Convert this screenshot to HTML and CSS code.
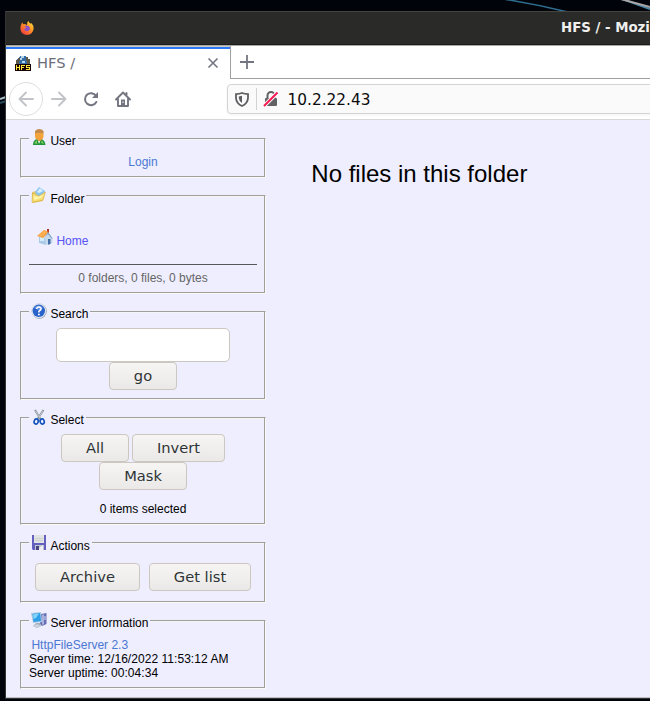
FILE: index.html
```html
<!DOCTYPE html>
<html lang="en">
<head>
<meta charset="utf-8">
<title>HFS /</title>
<link rel="stylesheet" href="styles.css">
</head>
<body>
<svg class="wallpaper" width="650" height="701" viewBox="0 0 650 701" aria-hidden="true">
  <path d="M503 -1Q535 4 568 12" stroke="#2f6d8f" stroke-width="1.5" fill="none"/>
  <path d="M622 -1L650 9" stroke="#4785a5" stroke-width="2"/>
  <path d="M617 -2L650 7" stroke="#aaa5a5" stroke-width="2"/>
  <path d="M0 99L6 97" stroke="#a9bdc8" stroke-width="2"/>
  <path d="M0 103L6 101" stroke="#28495c" stroke-width="2"/>
</svg>
<div class="window">
  <header class="titlebar">
    <svg class="firefox" width="14" height="14" viewBox="0 0 14 14">
      <defs><linearGradient id="fx" x1="1" y1="0" x2="0.2" y2="1"><stop offset="0" stop-color="#fff04a"/><stop offset=".45" stop-color="#ff9a24"/><stop offset="1" stop-color="#f0383f"/></linearGradient></defs>
      <path d="M2.2 1.3 3.2 3.3 5 3 6.3 4 7.2 3.2Q6.8 1 8.5 0 9 2 11 2.8L11.4 2Q14 4.700 13.600 8 12.700 13.600 7 13.900 1.500 13.600.4 8.500 0 5 2.200 1.300Z" fill="url(#fx)"/>
      <path d="M4.500 5 6.500 4.500 8.500 5Q10.500 6 9.800 8.500 8 11 5 9.500 3.400 8 4.800 7.400L6.500 7Z" fill="#8a50cf"/>
    </svg>
    <span class="window-title">HFS / - Mozilla Firefox</span>
  </header>
  <div class="tabs">
    <div class="tab">
      <svg class="favicon" width="16" height="16" viewBox="0 0 16 16" shape-rendering="crispEdges">
        <circle cx="8" cy="7" r="7" fill="#356ca5"/>
        <path d="M1 4h2V2h2v3H4v3H1zM11 1h2v2h2v5h-3V5h-1z" fill="#5d594b"/>
        <path d="M6 0h3v2H7v2H5V2h1zM7 5h3v2H7z" fill="#b4d4ec"/>
        <path d="M0 8h16v7H0z" fill="#180000"/>
        <path d="M1 9h1v2h2V9h1v5H4v-2H2v2H1zM6 9h4v1H7v1h2v1H7v2H6zM11 9h4v1h-3v1h3v3h-4v-1h3v-1h-3z" fill="#ffe83b"/>
      </svg>
      <span class="tab-title">HFS /</span>
      <svg class="close" width="12" height="12" viewBox="0 0 12 12"><path d="M1.500 1.500 10.500 10.500M10.500 1.500 1.500 10.500" stroke="#737580" stroke-width="1.600"/></svg>
    </div>
    <div class="tab-space">
      <svg width="14" height="14" viewBox="0 0 14 14"><path d="M7 0V14M0 7H14" stroke="#737580" stroke-width="1.800"/></svg>
    </div>
  </div>
  <nav class="toolbar">
    <span class="back"><svg width="16" height="16" viewBox="0 0 16 16"><path d="M15 8H1.500M8 1.500 1.500 8 8 14.500" fill="none" stroke="#c2c3c8" stroke-width="1.900" stroke-linecap="round" stroke-linejoin="round"/></svg></span>
    <svg class="forward" width="16" height="16" viewBox="0 0 16 16"><path d="M1 8H14.500M8 1.500 14.500 8 8 14.500" fill="none" stroke="#c2c3c8" stroke-width="1.900" stroke-linecap="round" stroke-linejoin="round"/></svg>
    <svg class="reload" width="16" height="16" viewBox="0 0 16 16"><path d="M13 4.800A6 6 0 1 0 13.300 11" fill="none" stroke="#737580" stroke-width="2" stroke-linecap="round"/><path d="M15 1v6H9z" fill="#737580"/></svg>
    <svg class="home" width="16" height="16" viewBox="0 0 16 16"><path d="M1 8.500 8 1.500 15 8.500M3 8V15H13V8M11.500 2V5" fill="none" stroke="#737580" stroke-width="1.900" stroke-linecap="round" stroke-linejoin="round"/><path d="M6 8.500h4V15H6z" fill="#737580"/><path d="M7.500 10.500h1V12h-1z" fill="#fff"/></svg>
    <div class="address">
      <svg width="14" height="15" viewBox="0 0 14 15"><path d="M7 1Q9.500 2 13 2.200V6Q12.700 11.500 7 14 1.300 11.500 1 6V2.200Q4.500 2 7 1Z" fill="none" stroke="#5d5d60" stroke-width="1.800"/><path d="M7 3.800V11Q4 9 3.800 6V4.500Z" fill="#5d5d60"/></svg>
      <span class="divider"></span>
      <svg width="16" height="16" viewBox="0 0 16 16"><path d="M4.500 8V4.500a3.500 3.500 0 0 1 7 0V8" fill="none" stroke="#626264" stroke-width="2"/><rect x="2" y="7" width="12" height="8" rx="1" fill="#626264"/><path d="M1 15 14.500 1.500" stroke="#fafafa" stroke-width="4"/><path d="M1 15 14.500 1.500" stroke="#f91952" stroke-width="1.900"/></svg>
      <span class="url">10.2.22.43</span>
    </div>
  </nav>
  <div class="page">
    <aside>
      <section class="panel user">
        <h2><svg width="16" height="16" viewBox="0 0 16 16"><path d="M2 16Q2 11 6 10h4q4 1 4.500 6z" fill="#239437"/><path d="M3 14l3-3v4zM11 11l2 4-3-1z" fill="#7acb61"/><path d="M6.500 10 8 15 10 10z" fill="#eef8ed"/><rect x="4" y="1" width="8.500" height="10" rx="4" fill="#f3a33b"/><path d="M4 5V2Q6 0 8 0q3 0 4.500 2v3l-1-1H5z" fill="#c58a49"/><path d="M5 9q3 4 6.500 0l-1 2q-2 2-4 0z" fill="#e08a32"/></svg><span>User</span></h2>
        <p><a href="#">Login</a></p>
      </section>
      <section class="panel folder">
        <h2><svg width="16" height="16" viewBox="0 0 16 16"><path d="M1 5 5 4 6 6 13 4 12 14 2 16z" fill="#e8c869"/><path d="M4 5 8 0 14 4 11 10 6 9z" fill="#8dc5ed"/><path d="M6 5 9 1 12 4 8 6z" fill="#d6effc"/><path d="M1 15.500 1.500 6 8 9 14.500 5 12 13z" fill="#f9df72" stroke="#cba034" stroke-width=".5"/><path d="M3 9 7 10 13 7 10 11 3 13z" fill="#fff4b0"/></svg><span>Folder</span></h2>
        <div class="home-link"><svg width="16" height="16" viewBox="0 0 16 16"><path d="M2 7 9 9V16L2 14z" fill="#a9cbe8"/><path d="M8 9 12 4 15.500 10V14L9 16z" fill="#c4d9ec"/><path d="M3 8h4v4H3z" fill="#d7ecfb"/><path d="M11 10h2.500v5L11 15.700z" fill="#436ba5"/><path d="M10 0h2v4h-2z" fill="#ba3024"/><path d="M0 7 7 1 12 3 6 9z" fill="#f5a044"/><path d="M1 7 7 2 10 3 5 7z" fill="#ffb254"/><path d="M11 3 16 10 14 9 11 5 7 10z" fill="#7da1c4"/></svg><a href="#">Home</a></div>
        <hr>
        <p>0 folders, 0 files, 0 bytes</p>
      </section>
      <section class="panel search">
        <h2><svg width="16" height="16" viewBox="0 0 16 16"><circle cx="8.200" cy="8.200" r="7.600" fill="#929cad"/><circle cx="7.800" cy="7.700" r="7.400" fill="#dfe5ef"/><circle cx="7.800" cy="7.800" r="6.200" fill="#2a62cb"/><path d="M3 5Q7 0 12 5L8 7z" fill="#5e91e2"/><path d="M5.500 6Q6 3.800 8 4q2.300.2 2 2-.2 1-1.500 1.700Q7.800 8.200 7.800 9.500" fill="none" stroke="#fff" stroke-width="1.600"/><path d="M7 10.700h1.800v1.600H7z" fill="#fff"/></svg><span>Search</span></h2>
        <form><input type="text" aria-label="Search"><button type="button">go</button></form>
      </section>
      <section class="panel select">
        <h2><svg width="16" height="16" viewBox="0 0 16 16"><path d="M4 1 9.500 10M12.500 1 6.500 10" stroke="#8b949b" stroke-width="2"/><path d="M4.500 2 9 9M12 2 8 8" stroke="#d5dadf" stroke-width=".7"/><ellipse cx="5.200" cy="12.500" rx="2" ry="2.500" fill="none" stroke="#1454bd" stroke-width="1.700" transform="rotate(20 5.200 12.500)"/><ellipse cx="11.200" cy="12.500" rx="2" ry="2.500" fill="none" stroke="#1454bd" stroke-width="1.700" transform="rotate(-20 11.200 12.500)"/></svg><span>Select</span></h2>
        <div class="buttons"><button class="all">All</button><button class="invert">Invert</button><button class="mask">Mask</button></div>
        <p>0 items selected</p>
      </section>
      <section class="panel actions">
        <h2><svg width="16" height="16" viewBox="0 0 16 16"><path d="M1 0H15V15H2L1 14z" fill="#6360c0"/><path d="M3 0H13V8H3z" fill="#e2e4e4"/><path d="M4 3h8v1H4zM4 5h8v1H4z" fill="#cdd1ce"/><path d="M4 10h9v5H4z" fill="#bec6d0"/><path d="M5 11h3v4H5z" fill="#48457c"/><path d="M8 13 12 10v5H8z" fill="#eef0f2"/></svg><span>Actions</span></h2>
        <div class="buttons"><button class="archive">Archive</button><button class="get-list">Get list</button></div>
      </section>
      <section class="panel server">
        <h2><svg width="16" height="16" viewBox="0 0 16 16"><path d="M10 2 15.500 1V12L11 14 9 12z" fill="#666fb3"/><path d="M11 3 13 2V12L11 13z" fill="#aab1dc"/><path d="M13 5h2M13 7h2" stroke="#d8dcf1"/><path d="M0 1 10 0 11 10 2 11z" fill="#acc8e0"/><path d="M1.500 2 9 1 10 9 2.500 10z" fill="#2d9ee8"/><path d="M2 2.500 8 1.500 5 6 2.500 7z" fill="#80d4fb"/><path d="M5 11h4l1 3-4 2-4-2z" fill="#a7b0bf"/><path d="M2 14 6 12 10 14 6 16z" fill="#c9d1dc"/></svg><span>Server information</span></h2>
        <div class="details"><a href="#">HttpFileServer 2.3</a><br>Server time: 12/16/2022 11:53:12 AM<br>Server uptime: 00:04:34</div>
      </section>
    </aside>
    <main>No files in this folder</main>
  </div>
</div>
</body>
</html>
```
FILE: styles.css
```css
* { box-sizing: border-box; }
html, body { margin: 0; width: 650px; height: 701px; overflow: hidden; background: #01030a; }
svg { display: block; flex: none; }
.wallpaper { position: absolute; top: 0; left: 0; }
.window { position: relative; width: 645px; height: 688px; margin: 11px 0 0 5px; border-left: 1px solid #343433; border-bottom: 1px solid #343433; background: #fff; overflow: hidden; font-family: "DejaVu Sans", sans-serif; }
.titlebar { display: flex; align-items: center; height: 34px; background: #2a2a28; border-top: 1px solid #444442; border-bottom: 1px solid #1c1c1b; color: #f0f0ee; }
.firefox { margin: 0 0 0 14px; }
.window-title { margin-left: 527px; padding-bottom: 1px; font-size: 13.33px; font-weight: bold; white-space: nowrap; }
.tabs { display: flex; height: 34px; border-top: 1px solid #aaa9a5; }
.tab { display: flex; align-items: center; width: 224px; height: 33px; padding: 0 0 1px 9px; border-top: 1px solid #c9c8c5; box-shadow: inset 0 2px #2a7af8; }
.favicon { margin-top: 2px; }
.tab-title { margin-left: 6px; font-size: 14.67px; line-height: 20px; color: #6b6d77; width: 170px; }
.close { margin-top: 0; }
.tab-space { flex: 1; padding: 9px 0 0 9px; border-left: 1px solid #a1a1a4; border-bottom: 1px solid #a1a1a4; }
.toolbar { display: flex; align-items: center; height: 41px; padding-left: 3px; border-bottom: 1px solid #d8d8da; }
.back { display: flex; flex: none; justify-content: center; align-items: center; width: 34px; height: 34px; border: 1px solid #dedee0; border-radius: 50%; }
.forward { margin-left: 8px; }
.reload, .home { margin-left: 16px; }
.address { display: flex; align-items: center; width: 470px; height: 30px; flex: none; margin-left: 96px; padding-left: 7px; background: #fafafa; border: 1px solid #d4d4d6; border-radius: 4px; box-shadow: 0 1px 3px #0000000d; }
.divider { width: 1px; height: 22px; margin: 0 6px 0 7px; background: #d3d3d5; }
.url { margin-left: 8.5px; padding-top: 2px; font-size: 15.33px; line-height: 20px; color: #0c0c0d; }
.page { display: flex; height: 578px; background: #eeeefe; border-bottom: 1px solid #bcbcc2; font-family: "Liberation Sans", Arial, sans-serif; font-size: 12px; line-height: 14px; color: #000; }
aside { display: flex; flex-direction: column; gap: 17px; width: 260px; padding: 18px 0 0 14px; }
.panel { flex: none; width: 246px; padding: 0 8px; border: 1px solid #a19f9a; border-right-color: #faf9f8; border-bottom-color: #faf9f8; box-shadow: inset -1px -1px #a19f9a, inset 1px 1px #f5f4f9; }
.user { height: 40px; }
.folder { height: 99px; }
.search { height: 89px; }
.select { height: 108px; }
.actions { height: 61px; }
.server { height: 69px; }
h2 { display: flex; align-items: flex-start; gap: 3.4px; width: fit-content; height: 18px; margin: -10px 0 0; padding: 1px 2px 0; background: #eeeefe; font-size: 12px; font-weight: normal; line-height: 14px; }
h2 span { margin-top: 4px; }
.user h2 svg { margin-top: -1px; }
.folder h2 span, .actions h2 span { margin-top: 5px; }
.actions h2 svg { margin-top: 1px; }
p { margin: 0; text-align: center; }
a { color: #4b78d2; text-decoration: none; }
.user p { margin-top: 8px; }
.home-link { display: flex; gap: 3.4px; height: 35px; margin-top: 25px; padding-left: 8px; }
.home-link a { margin-top: 5px; color: #5753f5; }
hr { height: 1px; margin: 0; border: 0; background: #55555a; }
.folder p { margin-top: 6px; color: #666; }
form { display: flex; flex-direction: column; align-items: center; margin-top: 8px; }
input { width: 174px; height: 34px; border: 1px solid #cdc7c2; border-radius: 5px; background: #fff; }
button { height: 28px; padding: 0; border: 1px solid #cdc7c2; border-radius: 4px; background: linear-gradient(#f6f5f4, #eae9e7); color: #2e3436; font: 14.67px/24px "DejaVu Sans", sans-serif; }
form button, .all { width: 68px; }
.buttons { display: flex; flex-wrap: wrap; justify-content: center; column-gap: 3px; margin-top: 8px; }
.invert { width: 93px; }
.mask { width: 88px; }
.select p { margin-top: 12px; }
.actions .buttons { column-gap: 9px; margin-top: 12px; }
.archive { width: 105px; }
.get-list { width: 102px; }
.details { margin-top: 9px; white-space: nowrap; letter-spacing: .045px; }
.details a { margin-left: 2.4px; letter-spacing: 0; }
main { padding: 40px 0 0 45.3px; font-size: 24px; line-height: 28px; white-space: nowrap; }
```
